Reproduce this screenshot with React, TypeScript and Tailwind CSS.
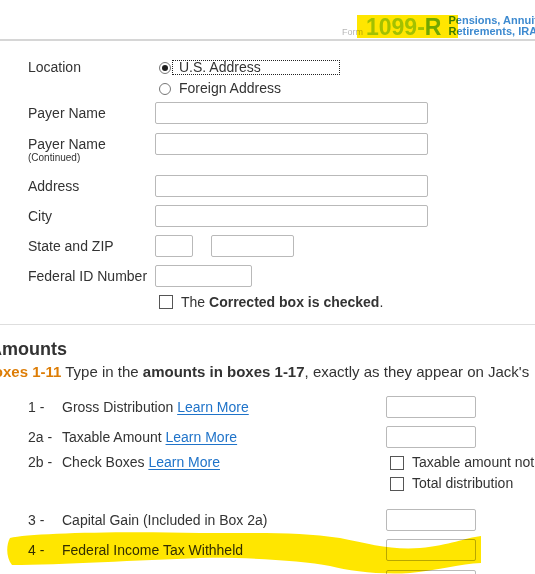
import React from 'react';

const Radio: React.FC<{ checked?: boolean }> = ({ checked }) => (
  <span className="w-[12px] h-[12px] rounded-full border border-[#777] bg-white flex items-center justify-center shrink-0">
    {checked && <span className="w-[6px] h-[6px] rounded-full bg-[#1e1e1e]" />}
  </span>
);

const Check: React.FC = () => (
  <span className="w-[14px] h-[14px] border border-[#555] bg-white shrink-0" />
);

const Field: React.FC<{ w: string }> = ({ w }) => (
  <span className={`${w} h-[22px] border border-[#b9b9b9] rounded-[2px] shrink-0 block`} />
);

const LearnMore: React.FC = () => (
  <a className="text-[#1f73c9] underline underline-offset-2 cursor-pointer">Learn More</a>
);

const AmountRow: React.FC<{ num: string; children: React.ReactNode; className?: string }> = ({ num, children, className }) => (
  <div className={`flex items-center h-[22px] ${className ?? ''}`}>
    <span className="w-[34px] shrink-0">{num}</span>
    <span className="w-[324px] shrink-0 whitespace-nowrap">{children}</span>
    <Field w="w-[90px]" />
  </div>
);

const App: React.FC = () => {
  return (
    <div className="relative w-[535px] h-[574px] overflow-hidden bg-white text-[14px] text-[#333] font-['Liberation_Sans',Arial,sans-serif]">
      {/* Header */}
      <header className="h-[41px] border-b-2 border-[#d6d6d6] flex items-end pl-[342px] whitespace-nowrap">
        <span className="text-[9px] leading-[9px] text-[#b8b8b8] mb-[2px] shrink-0">Form</span>
        <span className="ml-[3px] text-[23px] leading-[23px] font-bold text-[#a3d63c] shrink-0">
          1099-<span className="text-[#72b934]">R</span>
        </span>
        <div className="ml-[7px] mb-[2px] text-[11px] leading-[11px] font-bold text-[#3d8ad0] shrink-0">
          <div>Pensions, Annuities</div>
          <div>Retirements, IRA's</div>
        </div>
      </header>

      {/* Payer section */}
      <section className="pl-[28px] pt-[16px]">
        <div className="flex">
          <div className="w-[127px] shrink-0 h-[21px] leading-[21px]">Location</div>
          <div>
            <div className="flex items-center h-[21px] pl-[4px]">
              <Radio checked />
              <span className="ml-[1px] w-[168px] h-[15px] border border-dotted border-[#222] pl-[6px] leading-[13px]">
                U.S. Address
              </span>
            </div>
            <div className="flex items-center h-[21px] pl-[4px]">
              <Radio />
              <span className="ml-[8px]">Foreign Address</span>
            </div>
          </div>
        </div>

        <div className="flex items-center mt-[3px]">
          <div className="w-[127px] shrink-0">Payer Name</div>
          <Field w="w-[273px]" />
        </div>

        <div className="flex items-start mt-[9px]">
          <div className="w-[127px] shrink-0">
            <div className="h-[22px] leading-[22px]">Payer Name</div>
            <div className="-mt-[2px] text-[10px] leading-[10px]">(Continued)</div>
          </div>
          <Field w="w-[273px]" />
        </div>

        <div className="flex items-center mt-[12px]">
          <div className="w-[127px] shrink-0">Address</div>
          <Field w="w-[273px]" />
        </div>

        <div className="flex items-center mt-[8px]">
          <div className="w-[127px] shrink-0">City</div>
          <Field w="w-[273px]" />
        </div>

        <div className="flex items-center mt-[8px]">
          <div className="w-[127px] shrink-0">State and ZIP</div>
          <Field w="w-[38px]" />
          <span className="ml-[18px]">
            <Field w="w-[83px]" />
          </span>
        </div>

        <div className="flex items-center mt-[8px]">
          <div className="w-[127px] shrink-0 whitespace-nowrap">Federal ID Number</div>
          <Field w="w-[97px]" />
        </div>

        <div className="flex items-center h-[20px] mt-[5px] pl-[131px]">
          <Check />
          <span className="ml-[8px]">
            The <b>Corrected box is checked</b>.
          </span>
        </div>
      </section>

      <div className="mt-[12px] border-t border-[#dedede]" />

      {/* Amounts */}
      <section className="whitespace-nowrap">
        <h2 className="-ml-[11px] mt-[13px] text-[18px] leading-[22px] font-bold text-[#333]">Amounts</h2>
        <p className="-ml-[17px] mt-[2px] text-[15px] leading-[20px]">
          <b className="text-[#dd7d06]">Boxes 1-11</b> Type in the <b>amounts in boxes 1-17</b>, exactly as they appear on Jack's
        </p>
      </section>

      <section className="pl-[28px]">
        <AmountRow num="1 -" className="mt-[14px]">
          Gross Distribution <LearnMore />
        </AmountRow>
        <AmountRow num="2a -" className="mt-[8px]">
          Taxable Amount <LearnMore />
        </AmountRow>

        <div className="flex items-start mt-[4px]">
          <span className="w-[34px] shrink-0 h-[21px] leading-[21px]">2b -</span>
          <span className="w-[324px] shrink-0 h-[21px] leading-[21px]">
            Check Boxes <LearnMore />
          </span>
          <div className="whitespace-nowrap shrink-0">
            <div className="flex items-center h-[21px] pl-[4px]">
              <Check />
              <span className="ml-[8px]">Taxable amount not</span>
            </div>
            <div className="flex items-center h-[21px] pl-[4px]">
              <Check />
              <span className="ml-[8px]">Total distribution</span>
            </div>
          </div>
        </div>

        <AmountRow num="3 -" className="mt-[15px]">
          Capital Gain (Included in Box 2a)
        </AmountRow>
        <AmountRow num="4 -" className="mt-[8px]">
          Federal Income Tax Withheld
        </AmountRow>
        <div className="flex items-center h-[22px] mt-[9px]">
          <span className="w-[358px] shrink-0" />
          <Field w="w-[90px]" />
        </div>
      </section>

      {/* Highlighter marks */}
      <svg
        className="absolute inset-0 pointer-events-none mix-blend-multiply"
        width="535"
        height="574"
        viewBox="0 0 535 574"
      >
        <rect x="357" y="15" width="101" height="23" fill="#ffe600" />
        <path
          d="M 10 538 C 30 533, 120 531, 200 533 C 260 533, 300 532, 340 538 C 370 544, 390 550, 420 548 C 450 545, 465 538, 481 536 L 481 563 C 460 564, 440 570, 410 573 C 380 575, 350 571, 330 566 C 300 560, 240 557, 200 558 C 140 560, 60 565, 12 565 C 6 558, 6 545, 10 538 Z"
          fill="#ffe600"
        />
      </svg>
    </div>
  );
};

export default App;
